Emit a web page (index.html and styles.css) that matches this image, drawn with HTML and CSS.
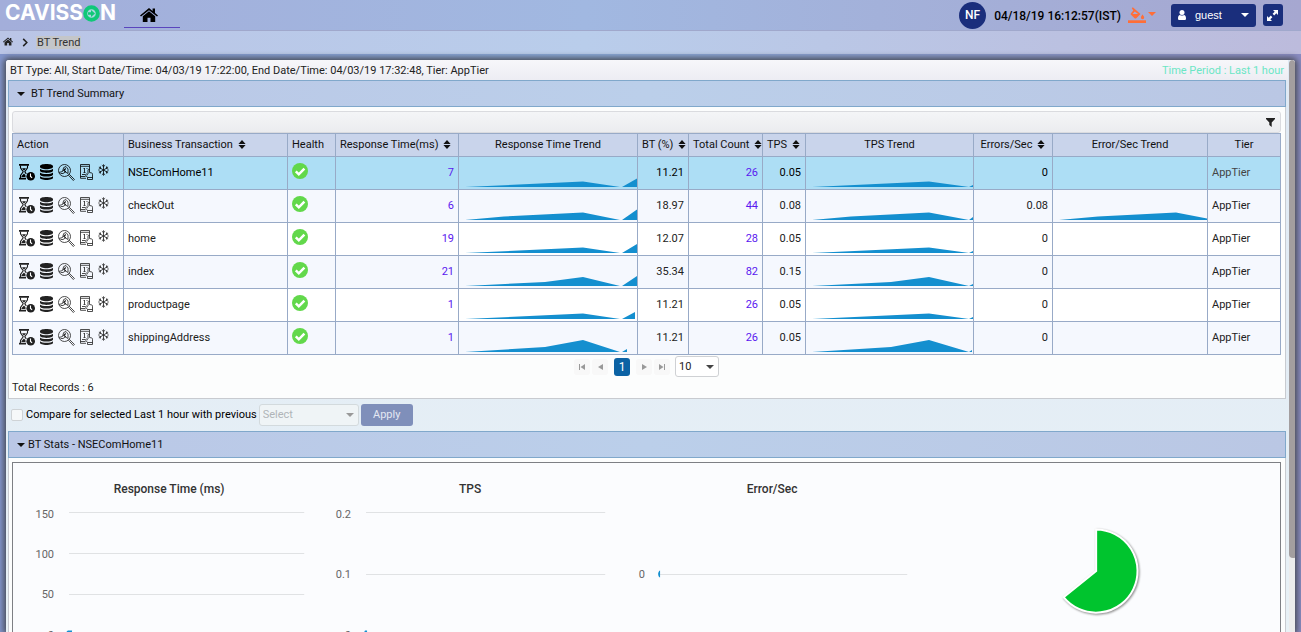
FILE: index.html
```html
<!DOCTYPE html>
<html lang="en">
<head>
<meta charset="utf-8">
<title>BT Trend</title>
<link rel="stylesheet" href="styles.css">
</head>
<body>
<svg class="sprite" aria-hidden="true">
  <symbol id="i-home" viewBox="0 0 18 14"><path d="M9 0 0 7.400l1 1.200L9 2.200l8 6.400 1-1.200-3-2.500V.6h-2.400v2.300z"/><path d="M9 3.200 2.800 8.200V14h4.700V9.800h3V14h4.700V8.200z"/></symbol>
  <symbol id="i-sort" viewBox="0 0 8 9"><path d="M4 0l3.600 3.900H.4zM4 9 .4 5.100h7.200z"/></symbol>
  <symbol id="i-caret" viewBox="0 0 8 4"><path d="M0 0h8L4 4z"/></symbol>
  <symbol id="i-wait" viewBox="0 0 16 17"><path d="M0 0h10v1.800H0zM0 13.800h7v1.800H0z"/><path d="M1.500 1.500v2.300L4.200 7.800 1.500 11.500V14M8.500 1.500v2.300L5.800 7.800l1.500 2" fill="none" stroke="currentColor" stroke-width="1.100"/><path d="M3 4.200h4L5 6.800zM5 9.500l1.500 1.800V13h-4v-1z"/><circle cx="11.700" cy="12.300" r="4.300"/><path d="M11.500 9.500v3l1.600 1.300" fill="none" stroke="#fff" stroke-width="1.100"/></symbol>
  <symbol id="i-db" viewBox="0 0 13 16"><path d="M0 2.200C0 .9 2.900 0 6.500 0S13 .9 13 2.200v.8c0 1.200-2.900 2.200-6.500 2.200S0 4.200 0 3zM0 4.800c1.200 1 3.600 1.500 6.500 1.500s5.300-.5 6.500-1.500v2c0 1.200-2.900 2.100-6.500 2.100S0 8 0 6.800zM0 8.500C1.200 9.500 3.600 10 6.500 10s5.300-.5 6.500-1.500v2c0 1.200-2.900 2.100-6.500 2.100S0 11.700 0 10.500zM0 12.200c1.200 1 3.600 1.500 6.500 1.500s5.300-.5 6.500-1.500v1.600C13 15.100 10.100 16 6.500 16S0 15.100 0 13.800z"/></symbol>
  <symbol id="i-search" viewBox="0 0 17 17"><g fill="none" stroke="currentColor" stroke-width=".8"><circle cx="6.500" cy="6.500" r="6"/><path d="M10.500 11.300l.9-.9 5 5-1.100 1.100z"/><path d="M1 8.500l3.500-1 1.200-4L8 2.500l2 2.500v4.500L7.500 8 5 9.500H2.500"/><path d="M7.800 4.500 5.800 6.300l2 1.700" stroke-width="1.200"/></g></symbol>
  <symbol id="i-report" viewBox="0 0 13 16"><g fill="none" stroke="currentColor" stroke-width=".8"><path d="M9.500 6V.5h-9v13.800H6M.5 2.300h9M4.500 4v4.500M3.500 8.500h2M3.500 4.500h1M6.500 4.500h1M2 10.500h3M.5 12.500h5"/><path d="M8 10V6c0-1 1.500-1 1.500 0v2.500l2 .4c.8.200 1 .6 1 1.300v5.300H7.500v-2L5.500 11c0-1 1-1.300 1.600-.6L8 11M7.500 13.500h5"/></g></symbol>
  <symbol id="i-snow" viewBox="0 0 11 12"><path d="M5.500.3v11.400M.9 3.300l9.200 5.400M10.100 3.300.9 8.700M3.900 1.200l1.600 1.500 1.600-1.500M3.900 10.800l1.600-1.500 1.600 1.500M.5 5.300l2.200-.9L2.200 2.300M8.800 9.700l-.5-2.100 2.200-.9M10.500 5.300l-2.200-.9.5-2.100M2.200 9.700l.5-2.100-2.200-.9" fill="none" stroke="currentColor" stroke-width=".8"/></symbol>
  <symbol id="i-ok" viewBox="0 0 16 16"><circle cx="8" cy="8" r="8" fill="#62d84b"/><path d="M3.800 8.300l3 3 5.600-5.700" fill="none" stroke="#fff" stroke-width="2.500"/></symbol>
  <symbol id="i-step" viewBox="0 0 5 6"><path d="M5 0v6L0 3z"/></symbol>
  <symbol id="i-end" viewBox="0 0 6 6"><path d="M0 0h1v6H0zM6 0v6L1.500 3z"/></symbol>
</svg>

<header class="topbar">
  <a class="logo" href="#" aria-label="Cavisson"><span>CAVISS</span><svg class="logo-o" viewBox="0 0 17 17"><circle cx="8.500" cy="8.500" r="6.300" fill="#a8d8df" stroke="#10c878" stroke-width="4"/><path d="M5 7.300h3V5l4 3.500-4 3.500V9.700H5z" fill="#10c878"/></svg><span>N</span></a>
  <a class="tab" href="#" aria-label="Home"><svg class="home-lg"><use href="#i-home"/></svg></a>
  <div class="tools">
    <span class="avatar">NF</span>
    <time class="clock">04/18/19 16:12:57(IST)</time>
    <button class="paint" type="button" aria-label="Theme"><svg class="drip" viewBox="0 0 18 16"><path d="M0 13.300h18V16H0z"/><path d="M4.800.3 12.500 7 8.300 11.200c-.5.500-1.200.5-1.700 0L3 7.800c-.5-.5-.5-1.100 0-1.600L5.300 3.600 3.800 1.300zM6.800 4.500 4.500 7h5.600z" fill-rule="evenodd"/><path d="M14.500 7.500s1.700 2 1.700 3a1.600 1.600 0 0 1-3.300 0c0-1 1.600-3 1.600-3z"/></svg><svg class="caret"><use href="#i-caret"/></svg></button>
    <button class="user" type="button"><svg class="person" viewBox="0 0 8 10"><circle cx="4" cy="2.600" r="2.500"/><path d="M0 8.500C0 6.500.8 5 2 5c1 .8 3 .8 4 0 1.200 0 2 1.500 2 3.500C8 9.500 7.400 10 6.500 10h-5C.6 10 0 9.500 0 8.500z"/></svg><span>guest</span><svg class="caret"><use href="#i-caret"/></svg></button>
    <button class="expand" type="button" aria-label="Full screen"><svg viewBox="0 0 11 11"><path d="M6 0h5v5L9.300 3.300 7.200 5.400 5.600 3.800l2.100-2.100zM5 11H0V6l1.700 1.700 2.100-2.100 1.600 1.600-2.100 2.100z"/></svg></button>
  </div>
</header>

<nav class="crumbs" aria-label="Breadcrumb">
  <a href="#" aria-label="Home"><svg class="home-sm"><use href="#i-home"/></svg></a>
  <svg class="chev" viewBox="0 0 6 10"><path d="M1 1l4 4-4 4" fill="none" stroke="#222" stroke-width="1.700"/></svg>
  <a class="here" href="#">BT Trend</a>
</nav>

<main class="panel">
  <div class="content">
    <div class="meta"><span>BT Type: All, Start Date/Time: 04/03/19 17:22:00, End Date/Time: 04/03/19 17:32:48, Tier: AppTier</span><span class="period">Time Period : Last 1 hour</span></div>

    <h2 class="bar"><svg class="caret"><use href="#i-caret"/></svg><span>BT Trend Summary</span></h2>
    <section class="box summary">
      <div class="toolbar"><button type="button" aria-label="Filter"><svg viewBox="0 0 9 9"><path d="M0 0h9v1L5.700 4.500V9L3.300 7V4.500L0 1z"/></svg></button></div>
      <table>
        <colgroup><col class="w-action"><col class="w-name"><col class="w-health"><col class="w-rt"><col class="w-rtt"><col class="w-bt"><col class="w-count"><col class="w-tps"><col class="w-tpst"><col class="w-err"><col class="w-errt"><col class="w-tier"></colgroup>
        <thead><tr>
          <th>Action</th>
          <th>Business Transaction<svg class="sort"><use href="#i-sort"/></svg></th>
          <th>Health</th>
          <th>Response Time(ms)<svg class="sort"><use href="#i-sort"/></svg></th>
          <th class="mid">Response Time Trend</th>
          <th>BT (%)<svg class="sort"><use href="#i-sort"/></svg></th>
          <th>Total Count<svg class="sort"><use href="#i-sort"/></svg></th>
          <th>TPS<svg class="sort"><use href="#i-sort"/></svg></th>
          <th class="mid">TPS Trend</th>
          <th class="mid">Errors/Sec<svg class="sort"><use href="#i-sort"/></svg></th>
          <th class="mid">Error/Sec Trend</th>
          <th class="mid">Tier</th>
        </tr></thead>
        <tbody>
          <tr class="selected">
            <td><div class="actions"><button aria-label="Flow path"><svg class="a-wait"><use href="#i-wait"/></svg></button><button aria-label="Database"><svg class="a-db"><use href="#i-db"/></svg></button><button aria-label="Inspect"><svg class="a-search"><use href="#i-search"/></svg></button><button aria-label="Report"><svg class="a-report"><use href="#i-report"/></svg></button><button aria-label="Hotspot"><svg class="a-snow"><use href="#i-snow"/></svg></button></div></td>
            <td>NSEComHome11</td><td><svg class="ok"><use href="#i-ok"/></svg></td>
            <td class="num"><a href="#">7</a></td>
            <td class="trend"><svg viewBox="0 0 178 30" preserveAspectRatio="none"><path d="M6 30 124 24.500 161 30zM163 30l15-8.500V30z"/></svg></td>
            <td class="num">11.21</td><td class="num"><a href="#">26</a></td><td class="num">0.05</td>
            <td class="trend"><svg viewBox="0 0 167 30" preserveAspectRatio="none"><path d="M6 30 123 24.500 163 30zM163 30l4-2v2z"/></svg></td>
            <td class="num">0</td><td class="trend"></td><td class="tier">AppTier</td>
          </tr>
          <tr>
            <td><div class="actions"><button aria-label="Flow path"><svg class="a-wait"><use href="#i-wait"/></svg></button><button aria-label="Database"><svg class="a-db"><use href="#i-db"/></svg></button><button aria-label="Inspect"><svg class="a-search"><use href="#i-search"/></svg></button><button aria-label="Report"><svg class="a-report"><use href="#i-report"/></svg></button><button aria-label="Hotspot"><svg class="a-snow"><use href="#i-snow"/></svg></button></div></td>
            <td>checkOut</td><td><svg class="ok"><use href="#i-ok"/></svg></td>
            <td class="num"><a href="#">6</a></td>
            <td class="trend"><svg viewBox="0 0 178 30" preserveAspectRatio="none"><path d="M6 30 45 26.500 124 22.500 161 30zM163 30l15-10.500V30z"/></svg></td>
            <td class="num">18.97</td><td class="num"><a href="#">44</a></td><td class="num">0.08</td>
            <td class="trend"><svg viewBox="0 0 167 30" preserveAspectRatio="none"><path d="M6 30 45 26.500 123 22.500 163 30zM163 30l4-3v3z"/></svg></td>
            <td class="num">0.08</td>
            <td class="trend"><svg viewBox="0 0 154 30" preserveAspectRatio="none"><path d="M6 30 45 26.500 123 22.500 154 28.500V30z"/></svg></td><td>AppTier</td>
          </tr>
          <tr>
            <td><div class="actions"><button aria-label="Flow path"><svg class="a-wait"><use href="#i-wait"/></svg></button><button aria-label="Database"><svg class="a-db"><use href="#i-db"/></svg></button><button aria-label="Inspect"><svg class="a-search"><use href="#i-search"/></svg></button><button aria-label="Report"><svg class="a-report"><use href="#i-report"/></svg></button><button aria-label="Hotspot"><svg class="a-snow"><use href="#i-snow"/></svg></button></div></td>
            <td>home</td><td><svg class="ok"><use href="#i-ok"/></svg></td>
            <td class="num"><a href="#">19</a></td>
            <td class="trend"><svg viewBox="0 0 178 30" preserveAspectRatio="none"><path d="M6 30 124 24.500 161 30zM163 30l15-9V30z"/></svg></td>
            <td class="num">12.07</td><td class="num"><a href="#">28</a></td><td class="num">0.05</td>
            <td class="trend"><svg viewBox="0 0 167 30" preserveAspectRatio="none"><path d="M6 30 123 24.500 163 30zM163 30l4-2v2z"/></svg></td>
            <td class="num">0</td><td class="trend"></td><td>AppTier</td>
          </tr>
          <tr>
            <td><div class="actions"><button aria-label="Flow path"><svg class="a-wait"><use href="#i-wait"/></svg></button><button aria-label="Database"><svg class="a-db"><use href="#i-db"/></svg></button><button aria-label="Inspect"><svg class="a-search"><use href="#i-search"/></svg></button><button aria-label="Report"><svg class="a-report"><use href="#i-report"/></svg></button><button aria-label="Hotspot"><svg class="a-snow"><use href="#i-snow"/></svg></button></div></td>
            <td>index</td><td><svg class="ok"><use href="#i-ok"/></svg></td>
            <td class="num"><a href="#">21</a></td>
            <td class="trend"><svg viewBox="0 0 178 30" preserveAspectRatio="none"><path d="M6 30 86 26 124 21 161 30zM163 30l15-10V30z"/></svg></td>
            <td class="num">35.34</td><td class="num"><a href="#">82</a></td><td class="num">0.15</td>
            <td class="trend"><svg viewBox="0 0 167 30" preserveAspectRatio="none"><path d="M6 30 85 26 123 21 163 30zM163 30l4-2v2z"/></svg></td>
            <td class="num">0</td><td class="trend"></td><td>AppTier</td>
          </tr>
          <tr>
            <td><div class="actions"><button aria-label="Flow path"><svg class="a-wait"><use href="#i-wait"/></svg></button><button aria-label="Database"><svg class="a-db"><use href="#i-db"/></svg></button><button aria-label="Inspect"><svg class="a-search"><use href="#i-search"/></svg></button><button aria-label="Report"><svg class="a-report"><use href="#i-report"/></svg></button><button aria-label="Hotspot"><svg class="a-snow"><use href="#i-snow"/></svg></button></div></td>
            <td>productpage</td><td><svg class="ok"><use href="#i-ok"/></svg></td>
            <td class="num"><a href="#">1</a></td>
            <td class="trend"><svg viewBox="0 0 178 30" preserveAspectRatio="none"><path d="M6 30 124 24.500 161 30zM163 30l13-7v7z"/></svg></td>
            <td class="num">11.21</td><td class="num"><a href="#">26</a></td><td class="num">0.05</td>
            <td class="trend"><svg viewBox="0 0 167 30" preserveAspectRatio="none"><path d="M6 30 123 24.500 163 30zM163 30l4-2v2z"/></svg></td>
            <td class="num">0</td><td class="trend"></td><td>AppTier</td>
          </tr>
          <tr>
            <td><div class="actions"><button aria-label="Flow path"><svg class="a-wait"><use href="#i-wait"/></svg></button><button aria-label="Database"><svg class="a-db"><use href="#i-db"/></svg></button><button aria-label="Inspect"><svg class="a-search"><use href="#i-search"/></svg></button><button aria-label="Report"><svg class="a-report"><use href="#i-report"/></svg></button><button aria-label="Hotspot"><svg class="a-snow"><use href="#i-snow"/></svg></button></div></td>
            <td>shippingAddress</td><td><svg class="ok"><use href="#i-ok"/></svg></td>
            <td class="num"><a href="#">1</a></td>
            <td class="trend"><svg viewBox="0 0 178 30" preserveAspectRatio="none"><path d="M6 30 86 25 124 18 161 30zM163 30l5-3v3z"/></svg></td>
            <td class="num">11.21</td><td class="num"><a href="#">26</a></td><td class="num">0.05</td>
            <td class="trend"><svg viewBox="0 0 167 30" preserveAspectRatio="none"><path d="M6 30 85 25 123 18 163 30zM163 30l3-2v2z"/></svg></td>
            <td class="num">0</td><td class="trend"></td><td>AppTier</td>
          </tr>
        </tbody>
      </table>
      <div class="pager">
        <button type="button" aria-label="First page"><svg class="p-end"><use href="#i-end"/></svg></button>
        <button type="button" aria-label="Previous page"><svg class="p-step"><use href="#i-step"/></svg></button>
        <button type="button" class="current">1</button>
        <button type="button" aria-label="Next page"><svg class="p-step flip"><use href="#i-step"/></svg></button>
        <button type="button" aria-label="Last page"><svg class="p-end flip"><use href="#i-end"/></svg></button>
        <span class="drop rows"><select aria-label="Rows per page"><option>10</option></select><svg class="caret"><use href="#i-caret"/></svg></span>
      </div>
      <p class="total">Total Records : 6</p>
    </section>

    <form class="compare">
      <input type="checkbox" id="cmp"><label for="cmp">Compare for selected Last 1 hour with previous</label>
      <span class="drop prev"><select aria-label="Previous period" disabled><option>Select</option></select><svg class="caret"><use href="#i-caret"/></svg></span>
      <button type="button" class="apply" disabled>Apply</button>
    </form>

    <h2 class="bar tight"><svg class="caret"><use href="#i-caret"/></svg><span>BT Stats - NSEComHome11</span></h2>
    <section class="box">
      <div class="charts">
        <svg viewBox="0 0 301 220"><text class="title" x="151" y="30">Response Time (ms)</text>
          <path class="grid" d="M51 49.500h235M51 90.500h235M51 131.500h235M51 172.500h235"/>
          <g class="axis"><text x="36" y="55">150</text><text x="36" y="95">100</text><text x="36" y="135">50</text><text x="36" y="176">0</text></g>
          <path class="mark" d="M48 171c0-2 1-3.500 3-3.500h3c0 3-1 6-6 6z"/></svg>
        <svg viewBox="0 0 301 220"><text class="title" x="151" y="30">TPS</text>
          <path class="grid" d="M47 49.500h239M47 111.500h239M47 173.500h239"/>
          <g class="axis"><text x="32" y="55">0.2</text><text x="32" y="115">0.1</text><text x="32" y="176">0</text></g>
          <path class="mark" d="M44 171l2-3.500h2v5z"/></svg>
        <svg viewBox="0 0 301 220"><text class="title" x="152" y="30">Error/Sec</text>
          <path class="grid" d="M39 111.500h248"/>
          <g class="axis"><text x="25" y="115">0</text></g>
          <path class="mark" d="M40 107.500v7c-2.500-1-2.500-6 0-7z"/></svg>
        <svg class="pie" viewBox="0 0 350 220"><path d="M174 108V66.500a41.500 41.500 0 1 1-32.500 67.500z"/></svg>
      </div>
    </section>
  </div>
  <div class="scroll"><div class="thumb"></div></div>
</main>
</body>
</html>
```
FILE: styles.css
```css
* { box-sizing: border-box; }
body {
  margin: 0;
  height: 100vh;
  overflow: hidden;
  display: flex;
  flex-direction: column;
  font: 11px/16px Roboto, "Liberation Sans", sans-serif;
  color: #222;
  background: linear-gradient(90deg, #8295cc, #8aa9d8 45%, #8a8cc2);
}
svg { display: block; flex: none; fill: currentColor; }
button { font: inherit; color: inherit; border: 0; padding: 0; background: none; }
a { color: inherit; text-decoration: none; }
h2, p { margin: 0; font: inherit; }
.sprite { position: absolute; width: 0; height: 0; }
.caret { width: 8px; height: 4px; }

.topbar {
  flex: none;
  height: 31px;
  display: flex;
  align-items: center;
  background: linear-gradient(90deg, #a3aeda, #a1b8e1 45%, #a6a7d0);
  border-bottom: 1px solid #a0a8cc;
}
.logo {
  display: flex;
  align-items: center;
  width: 124px;
  padding: 0 0 4px 5px;
  color: #fff;
  font: 700 21px/24px Inter, sans-serif;
}
.logo-o { width: 17px; height: 17px; }
.tab {
  align-self: flex-start;
  width: 56px;
  height: 28px;
  padding-top: 8px;
  border-bottom: 1px solid #5a45bd;
  color: #000;
}
.home-lg { width: 18px; height: 14px; margin-left: 16px; }
.tools { margin-left: auto; display: flex; align-items: center; padding-right: 18px; }
.avatar {
  width: 27px;
  height: 27px;
  border-radius: 50%;
  background: #1a2e7c;
  color: #fff;
  font-weight: 500;
  font-size: 12px;
  line-height: 27px;
  text-align: center;
}
.clock { margin-left: 8px; color: #000; font-weight: 500; font-size: 12px; line-height: 18px; padding-top: 1px; }
.paint { display: flex; align-items: center; gap: 2px; margin-left: 7px; color: #ff6e38; }
.paint .caret { margin-bottom: 2px; }
.drip { width: 18px; height: 16px; }
.user {
  display: flex;
  align-items: center;
  width: 85px;
  height: 23px;
  margin-left: 15px;
  padding: 0 7px;
  border-radius: 3px;
  background: #1a2e7c;
  color: #fff;
  font: 11px/16px "Liberation Sans", sans-serif;
}
.user span { margin: 0 auto 0 9px; }
.person { width: 8px; height: 10px; }
.expand {
  width: 20px;
  height: 22px;
  margin-left: 7px;
  padding: 0 4px;
  border-radius: 3px;
  background: #1a2e7c;
  color: #fff;
}
.expand svg { width: 11px; height: 11px; }

.crumbs {
  flex: none;
  display: flex;
  align-items: center;
  height: 23px;
  padding-left: 3px;
  background: linear-gradient(90deg, #bac5e6, #b9cdeb 45%, #bcbbdc);
}
.home-sm { width: 10px; height: 9px; margin-bottom: 2px; }
.chev { width: 6px; height: 9px; margin: 0 8px 0 9px; }
.here { padding: 0 1px; line-height: 13px; background: #c4c6c9; color: #333; }

.panel {
  flex: 1;
  min-height: 0;
  display: flex;
  margin: 6px 6px 0;
  overflow: hidden;
  border-radius: 3px 3px 0 0;
  background: linear-gradient(#dfe9f4, #e8f1f6);
  box-shadow: 0 0 6px 2px #45484f;
}
.content { flex: 1; padding: 0 2px; }
.meta {
  display: flex;
  justify-content: space-between;
  height: 20px;
  margin: 0 -2px;
  padding: 3px 4px 1px;
  background: linear-gradient(#f7f7fa, #ededf3);
}
.period { color: #6be6c5; }
.bar {
  display: flex;
  align-items: center;
  gap: 6px;
  height: 27px;
  padding-left: 8px;
  border: 1px solid #80a8cb;
  background: linear-gradient(90deg, #bac7e6, #bbcfea 50%, #bac7e4);
  color: #111;
}
.bar.tight { gap: 3px; }
.box { padding: 4px 4px 3px 3px; border: 1px solid #c8cbd0; border-top: 0; background: #fcfdfd; }
.summary { padding-bottom: 2px; }
.toolbar {
  display: flex;
  align-items: center;
  justify-content: flex-end;
  height: 22px;
  padding-right: 5px;
  border: 1px solid #dadbdf;
  border-radius: 3px;
  background: linear-gradient(#f4f5f7, #ebecef);
}
.toolbar svg { width: 9px; height: 9px; }

table { width: 100%; table-layout: fixed; border-collapse: collapse; }
.w-action { width: 111px; }
.w-name { width: 164px; }
.w-health { width: 48px; }
.w-rt { width: 123px; }
.w-rtt { width: 179px; }
.w-bt { width: 51px; }
.w-count { width: 74px; }
.w-tps { width: 43px; }
.w-tpst { width: 168px; }
.w-err { width: 79px; }
.w-errt { width: 155px; }
.w-tier { width: 73px; }
th, td { border: 1px solid #98aac7; padding: 0 4px; white-space: nowrap; }
th { height: 23px; font-weight: 400; text-align: left; background: #c9d4eb; color: #111; }
.mid { text-align: center; }
td { height: 33px; }
tbody tr { background: #fff; }
tbody tr:nth-child(even) { background: #f5f8fe; }
tbody .selected { background: #addef5; color: #000; }
.selected .tier { color: #444; }
.num { text-align: right; }
.num a { color: #5a18f0; }
.sort { display: inline-block; width: 8px; height: 9px; margin-left: 5px; vertical-align: -1px; }
.actions { display: flex; align-items: center; gap: 5px; padding: 0 0 2px 2px; }
.a-wait { width: 16px; height: 17px; }
.a-db { width: 13px; height: 16px; }
.a-search { width: 17px; height: 17px; }
.a-report { width: 13px; height: 16px; }
.a-snow { width: 11px; height: 12px; margin-bottom: 4px; }
.ok { width: 16px; height: 16px; margin-bottom: 4px; }
.trend { padding: 0; vertical-align: bottom; }
.trend svg { width: 100%; height: 30px; margin-bottom: 2px; fill: #148fcf; }

.pager { display: flex; align-items: center; justify-content: center; gap: 2px; height: 23px; color: #999; }
.pager button { display: grid; place-items: center; width: 16px; height: 16px; border-radius: 3px; background: #f8f8f8; }
.pager .current { height: 18px; margin: 0 4px; background: #0b62a4; color: #fff; font-size: 12px; }
.p-step { width: 5px; height: 6px; }
.p-end { width: 6px; height: 6px; }
.flip { transform: scaleX(-1); }
.drop { display: flex; align-items: center; border: 1px solid #cfd1d4; border-radius: 3px; background: #fff; color: #444; padding-right: 4px; }
.drop select { appearance: none; flex: 1; min-width: 0; padding: 0 3px; border: 0; background: none; font: inherit; color: #222; }
.rows { width: 44px; height: 21px; margin-left: 3px; }
.total { padding-top: 2px; line-height: 16px; }

.compare { display: flex; align-items: center; height: 32px; padding-left: 3px; color: #000; }
.compare input { appearance: none; width: 12px; height: 12px; margin: 0 3px 0 0; border: 1px solid #cfd3d6; border-radius: 2px; background: #f6f8f9; }
.prev { width: 100px; height: 22px; margin: 0 2px; background: #eff4f6; border-color: #d3dadd; color: #999; }
.prev select { color: #b0b5b8; opacity: 1; }
.apply { width: 52px; height: 22px; border-radius: 3px; background: #7f8fba; color: #e4e8f3; }

.charts {
  display: grid;
  grid-template-columns: 301fr 301fr 301fr 350fr;
  padding: 0 8px 0 5px;
  border: 1px solid #7d7f84;
  background: #fbfcfe;
}
.charts svg { width: 100%; }
.title { font-weight: 500; font-size: 12px; fill: #333; text-anchor: middle; }
.grid { stroke: #e0e2e4; fill: none; }
.axis { fill: #666; text-anchor: end; }
.mark { fill: #148fcf; }
.pie path { fill: #00c42e; stroke: #fff; stroke-width: 2; filter: drop-shadow(1px 1px 1px #888); }

.scroll { flex: none; width: 8px; margin-left: 1px; background: #ececec; border-radius: 4px; }
.thumb { height: 87%; border-radius: 4px; background: #a39e9f; }
```
